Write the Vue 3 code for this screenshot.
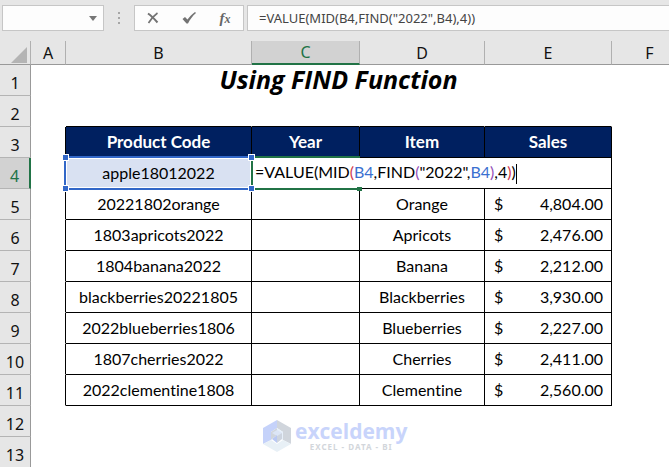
<template>
	<main class="workbook">
		<div class="formula-bar">
			<div class="name-box">
				<input class="name-input" type="text" aria-label="Name box" />
				<button class="name-toggle" type="button" aria-label="Show names">
					<svg width="8" height="5" viewBox="0 0 8 5"><path d="M0 0h8L4 5z" fill="#777" /></svg>
				</button>
			</div>
			<svg class="grip" width="2" height="12" viewBox="0 0 2 12">
				<path d="M0 0h2v2H0zM0 5h2v2H0zM0 10h2v2H0z" fill="#a6a6a6" />
			</svg>
			<div class="actions">
				<button type="button" aria-label="Cancel">
					<svg width="12" height="12" viewBox="0 0 12 12" fill="none" stroke="#737373">
						<path d="M1 1.500c3 2 6 5 9.500 9" stroke-width="2" />
						<path d="M10.500 1C7 3.500 4 7 1.500 11" stroke-width="1.600" />
					</svg>
				</button>
				<button type="button" aria-label="Enter">
					<svg width="14" height="12" viewBox="0 0 14 12">
						<path d="M0.500 7 3 5l2.500 2.500C7.500 5 10 2 13 0l1 1C10.500 4 8 7.500 6 11.500H4.500z" fill="#737373" />
					</svg>
				</button>
				<button class="fx" type="button" aria-label="Insert function">f<span>x</span></button>
			</div>
			<input v-model="formula" class="formula-input" type="text" aria-label="Formula bar" spellcheck="false" />
		</div>

		<div class="sheet">
			<table>
				<colgroup>
					<col class="col-head" />
					<col class="col-a" />
					<col class="col-b" />
					<col class="col-c" />
					<col class="col-d" />
					<col class="col-e" />
					<col />
				</colgroup>
				<thead>
					<tr>
						<th class="corner">
							<svg width="16" height="16" viewBox="0 0 16 16"><path d="M16 0v16H0z" fill="#b4b4b4" /></svg>
						</th>
						<th v-for="c in columns" :key="c" scope="col" :class="{ active: c === 'C' }">{{ c }}</th>
					</tr>
				</thead>
				<tbody>
					<tr>
						<th scope="row">1</th>
						<td></td>
						<td class="title" colspan="4">Using FIND Function</td>
						<td></td>
					</tr>
					<tr class="above">
						<th scope="row">2</th>
						<td v-for="c in columns" :key="c"></td>
					</tr>
					<tr class="data heading">
						<th scope="row">3</th>
						<td></td>
						<td v-for="h in headings" :key="h">{{ h }}</td>
						<td></td>
					</tr>
					<tr class="data">
						<th scope="row" class="active">4</th>
						<td></td>
						<td class="source">
							apple18012022
							<div class="range"><i /><i /><i /><i /></div>
						</td>
						<td class="editing" colspan="3">
							<div class="edit-frame"></div>
							<span v-for="(p, i) in parts" :key="i" :class="p[1]">{{ p[0] }}</span><span class="caret"></span>
						</td>
						<td></td>
					</tr>
					<tr v-for="(r, i) in rows" :key="r.code" class="data">
						<th scope="row">{{ i + 5 }}</th>
						<td></td>
						<td>{{ r.code }}</td>
						<td></td>
						<td>{{ r.item }}</td>
						<td><div class="money"><span>$</span><span>{{ r.sales }}</span></div></td>
						<td></td>
					</tr>
					<tr v-for="n in [12, 13]" :key="n">
						<th scope="row">{{ n }}</th>
						<td v-for="c in columns" :key="c"></td>
					</tr>
				</tbody>
			</table>

			<div class="watermark">
				<svg width="28" height="32" viewBox="0 0 28 32">
					<path d="M14 0 0 8v16l8-4v-8l6-4z" fill="#c5d2fa" />
					<path d="M14 0v8l6 4v8l8 4V8z" fill="#d0d5dc" />
					<path d="M0 24l8-4 6 4 6-4 8 4-14 8z" fill="#e8f0f6" />
					<path d="M8 12l6-4v7l-5 4-1 1z" fill="#d0d5dc" />
					<path d="M14 8l6 4v8l-6-4z" fill="#e6effa" />
					<path d="M9 13l5-3 5 3-5 3z" fill="#dce5f6" />
					<path d="M9 19l5-4v8z" fill="#b9c8f3" />
					<path d="M14 16l5-3v6l-5 4z" fill="#cdd4df" />
				</svg>
				<div>
					<div class="brand">exceldemy</div>
					<div class="tagline">EXCEL - DATA - BI</div>
				</div>
			</div>
		</div>
	</main>
</template>

<script setup>
import { ref } from 'vue';

const columns = ['A', 'B', 'C', 'D', 'E', 'F'];
const headings = ['Product Code', 'Year', 'Item', 'Sales'];

const formula = ref('=VALUE(MID(B4,FIND("2022",B4),4))');

// [text, colour class] for the in-cell editor
const parts = [
	['=VALUE(MID', ''],
	['(', 'red'],
	['B4', 'blue'],
	[',FIND', ''],
	['(', 'purple'],
	['"2022",', ''],
	['B4', 'blue'],
	[')', 'purple'],
	[',4', ''],
	[')', 'red'],
	[')', ''],
];

const rows = [
	{ code: '20221802orange', item: 'Orange', sales: '4,804.00' },
	{ code: '1803apricots2022', item: 'Apricots', sales: '2,476.00' },
	{ code: '1804banana2022', item: 'Banana', sales: '2,212.00' },
	{ code: 'blackberries20221805', item: 'Blackberries', sales: '3,930.00' },
	{ code: '2022blueberries1806', item: 'Blueberries', sales: '2,227.00' },
	{ code: '1807cherries2022', item: 'Cherries', sales: '2,411.00' },
	{ code: '2022clementine1808', item: 'Clementine', sales: '2,560.00' },
];
</script>

<style>
body {
	margin: 0;
	background: #fff;
}
</style>

<style scoped>
* {
	box-sizing: border-box;
}
.workbook {
	overflow: hidden;
	font-family: Lato, 'Liberation Sans', sans-serif;
	font-variant-ligatures: none;
	color: #000;
}

/* formula bar */
.formula-bar {
	display: flex;
	align-items: center;
	padding: 5px 0 10px 2px;
	background: #e6e6e6;
}
.name-box,
.actions,
.formula-input {
	height: 26px;
	border: 1px solid #c6c6c6;
	background: #fdfdfd;
}
.name-box {
	display: flex;
	width: 102px;
}
.name-input {
	flex: 1;
	min-width: 0;
	border: 0;
	background: none;
	outline: none;
}
button {
	display: flex;
	align-items: center;
	justify-content: center;
	padding: 0;
	border: 0;
	background: none;
}
.name-toggle {
	width: 20px;
}
.grip {
	margin: 0 14px;
}
.actions {
	display: flex;
	width: 110px;
}
.actions button {
	flex: 1;
}
.fx {
	font: italic bold 15px 'Liberation Serif', serif;
	color: #666;
}
.fx span {
	padding-top: 2px;
	font-size: 12px;
}
.formula-input {
	flex: 1;
	min-width: 0;
	margin-left: 3px;
	padding: 0 11px;
	border-right: 0;
	font: 13px 'Noto Sans', 'Open Sans', sans-serif;
	color: #444;
	outline: none;
}

/* grid */
.sheet {
	position: relative;
}
table {
	width: 100%;
	min-width: 688px;
	table-layout: fixed;
	border-collapse: separate;
	border-spacing: 0;
}
.col-head { width: 31px; }
.col-a { width: 35px; }
.col-b { width: 186px; }
.col-c { width: 108px; }
.col-d { width: 125px; }
.col-e { width: 127px; }

th {
	padding: 0;
	border-right: 1px solid #b0b0b0;
	border-bottom: 1px solid #999;
	background: #e6e6e6;
	font: 16px/20px 'Noto Sans', 'Open Sans', sans-serif;
	color: #111;
}
thead th {
	height: 24px;
}
thead th.active {
	border-bottom: 2px solid #217346;
}
thead .corner {
	padding: 4px 3px 0 0;
	text-align: right;
	line-height: 0;
}
tbody th {
	height: 31px;
	padding-top: 6px;
	border-right-color: #999;
	border-bottom-color: #b4b4b4;
}
tbody th.active {
	border-right: 2px solid #217346;
}
th.active {
	background: #d2d2d2;
	color: #217346;
}
td {
	height: 31px;
	padding: 0;
	border-right: 1px solid transparent;
	border-bottom: 1px solid transparent;
	font-size: 16px;
	line-height: 20px;
	text-align: center;
	white-space: nowrap;
}
.title {
	padding-bottom: 2px;
	font-family: 'Open Sans', 'Noto Sans', sans-serif;
	font-size: 25px;
	font-style: italic;
	font-weight: bold;
}
.above td:not(:nth-child(2), :last-child),
.data td:not(:nth-child(2), :last-child) {
	border-bottom-color: #000;
}
.data td:not(:last-child) {
	border-right-color: #000;
}
.heading td:not(:nth-child(2), :last-child) {
	background: #002060;
	color: #fff;
	font-size: 17px;
	font-weight: bold;
}
.money {
	display: flex;
	justify-content: space-between;
	padding: 0 8px 0 9px;
}

/* referenced range and the cell being edited */
.source,
.editing {
	position: relative;
}
.source {
	background: #d9e1f2;
}
.range {
	position: absolute;
	z-index: 2;
	inset: -2px 0 -2px -2px;
	border: 2px solid #3267c8;
	border-right: 0;
	box-shadow: inset 0 0 0 1px #fff;
}
.range i {
	position: absolute;
	width: 7px;
	height: 7px;
	border: 1px solid #fff;
	background: #3267c8;
}
.range i:nth-child(1) { top: -4px; left: -4px; }
.range i:nth-child(2) { top: -4px; right: -4px; }
.range i:nth-child(3) { bottom: -4px; left: -4px; }
.range i:nth-child(4) { bottom: -4px; right: -4px; }
.editing {
	padding-left: 3px;
	text-align: left;
}
.edit-frame {
	position: absolute;
	z-index: 1;
	top: -2px;
	bottom: -2px;
	left: -1px;
	width: 109px;
	border: 2px solid #217346;
	border-right: 0;
}
.edit-frame::after {
	content: '';
	position: absolute;
	right: -2px;
	bottom: -3px;
	width: 5px;
	height: 4px;
	background: #217346;
}
.red { color: #d13a50; }
.blue { color: #3a70d0; }
.purple { color: #9550b8; }
.caret {
	display: inline-block;
	width: 1px;
	height: 20px;
	background: #000;
	vertical-align: middle;
}

.watermark {
	position: absolute;
	bottom: 16px;
	left: 263px;
	display: flex;
	align-items: center;
	gap: 4px;
	text-align: center;
}
.brand {
	font: bold 21px/22px 'Open Sans', 'Noto Sans', sans-serif;
	color: #c8d4fb;
}
.tagline {
	font: bold 8px/10px 'Noto Sans', 'Open Sans', sans-serif;
	letter-spacing: 1px;
	color: #d2d6db;
}
</style>
